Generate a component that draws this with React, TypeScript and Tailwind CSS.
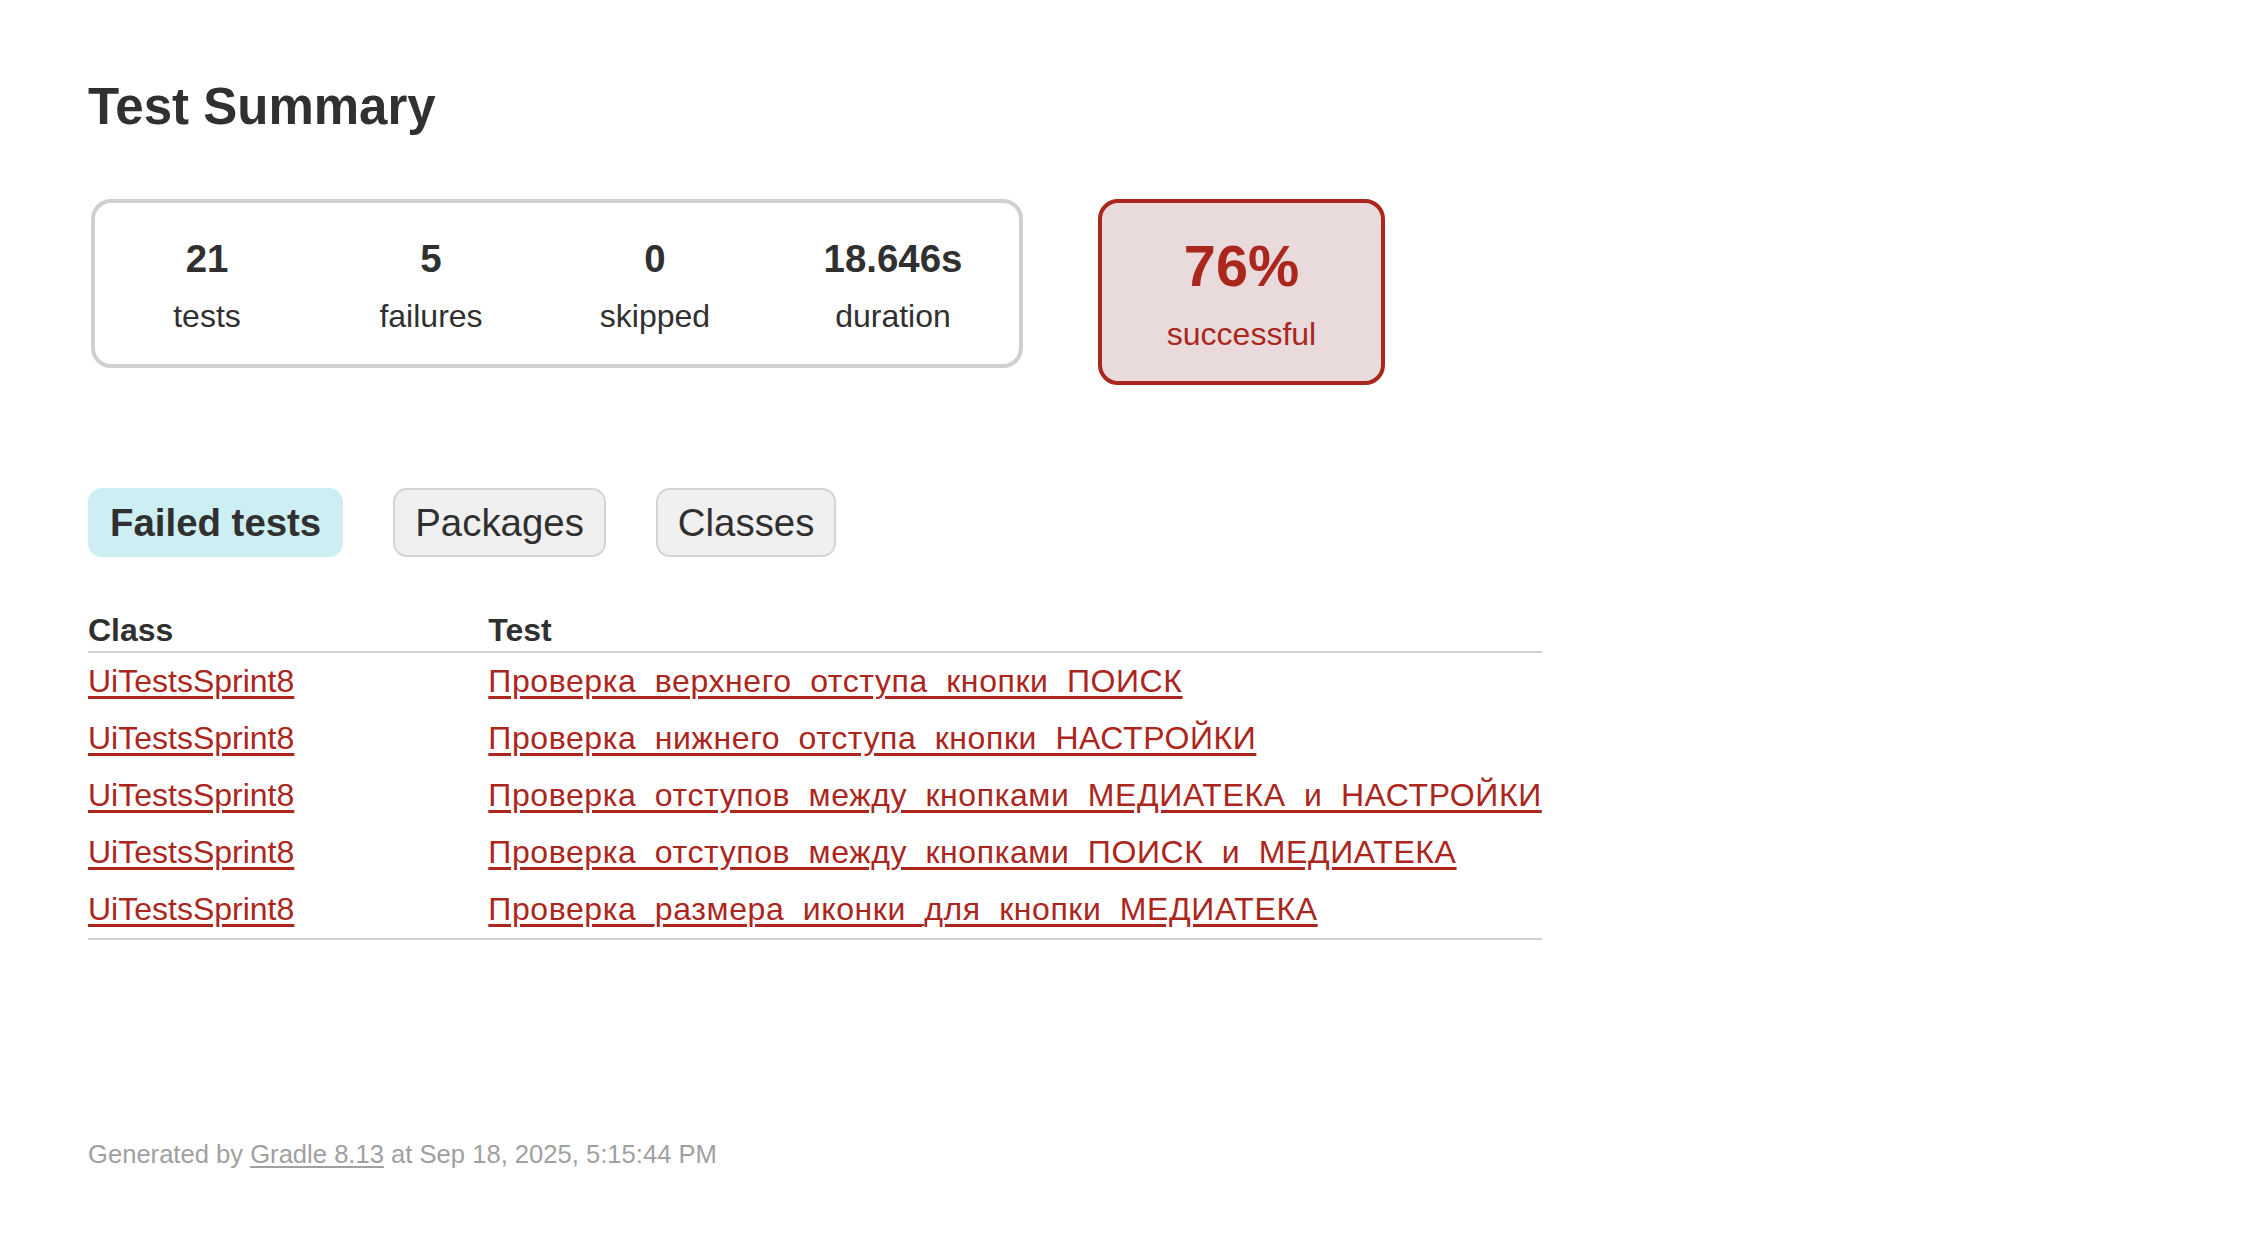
import React from 'react';

const stats = [
    { value: '21', label: 'tests', width: 'w-[224px]' },
    { value: '5', label: 'failures', width: 'w-[224px]' },
    { value: '0', label: 'skipped', width: 'w-[224px]' },
    { value: '18.646s', label: 'duration', width: 'w-[252px]' },
];

const failed = [
    'Проверка_верхнего_отступа_кнопки_ПОИСК',
    'Проверка_нижнего_отступа_кнопки_НАСТРОЙКИ',
    'Проверка_отступов_между_кнопками_МЕДИАТЕКА_и_НАСТРОЙКИ',
    'Проверка_отступов_между_кнопками_ПОИСК_и_МЕДИАТЕКА',
    'Проверка_размера_иконки_для_кнопки_МЕДИАТЕКА',
];

export default function App() {
    return (
        <div className="min-h-screen bg-white pl-[88px] pt-[77px] text-[#303030] font-['Liberation_Sans',Arial,sans-serif] text-[32px] leading-[37px]">
            <h1 className="text-[51px] font-bold leading-[60px]">Test Summary</h1>

            <div className="mt-[62px] flex items-start">
                <div className="ml-[3px] flex rounded-[20px] border-4 border-[#d0d0d0] pt-[34px] pb-[29px]">
                    {stats.map(s => (
                        <div key={s.label} className={`${s.width} text-center`}>
                            <p className="mb-[17px] text-[38.4px] font-bold leading-[44px]">{s.value}</p>
                            <p>{s.label}</p>
                        </div>
                    ))}
                </div>
                <div className="ml-[75px] w-[287px] rounded-[20px] border-4 border-[#ab261d] bg-[#e9dbdb] pt-[30px] pb-[28px] text-center text-[#ab261d]">
                    <p className="mb-[17px] text-[57.6px] font-bold leading-[66px]">76%</p>
                    <p>successful</p>
                </div>
            </div>

            <ul className="mt-[103px] flex gap-[50px] text-[38.4px] leading-[45px]">
                <li className="rounded-[14px] border-2 border-[#cdeef3] bg-[#cdeef3] px-[20px] py-[10px] font-bold">Failed tests</li>
                <li className="rounded-[14px] border-2 border-[#d4d4d4] bg-[#f0f0f0] px-[20px] py-[10px]">Packages</li>
                <li className="rounded-[14px] border-2 border-[#d4d4d4] bg-[#f0f0f0] px-[20px] py-[10px]">Classes</li>
            </ul>

            <table className="mt-[54px] border-collapse border-b-2 border-[#d0d0d0]">
                <thead>
                    <tr className="border-b-2 border-[#d0d0d0]">
                        <th className="pt-[1px] pb-[2px] text-left font-bold">Class</th>
                        <th className="pl-[194px] pt-[1px] pb-[2px] text-left font-bold">Test</th>
                    </tr>
                </thead>
                <tbody>
                    {failed.map(name => (
                        <tr key={name}>
                            <td className="whitespace-nowrap py-[10px]">
                                <a href="#" className="text-[#ab261d] underline decoration-[2.5px] underline-offset-[4px]">UiTestsSprint8</a>
                            </td>
                            <td className="whitespace-nowrap py-[10px] pl-[194px]">
                                <a href="#" className="tracking-[0.6px] text-[#ab261d] underline decoration-[2.5px] underline-offset-[4px]">{name}</a>
                            </td>
                        </tr>
                    ))}
                </tbody>
            </table>

            <p className="mt-[199px] text-[25.6px] leading-[30px] text-[#a0a0a0]">
                Generated by <a href="#" className="underline decoration-[2px] underline-offset-[3px]">Gradle 8.13</a> at Sep 18, 2025, 5:15:44 PM
            </p>
        </div>
    );
}
